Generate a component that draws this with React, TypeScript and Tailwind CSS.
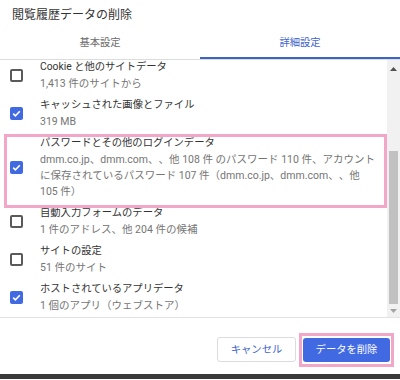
import React from "react";

const FONT = { fontFamily: 'Roboto, "Noto Sans CJK JP", sans-serif' };

function Box({ checked }: { checked: boolean }) {
  if (checked) {
    return (
      <div className="w-[13px] h-[13px] rounded-[2px] bg-[#4169e1] flex items-center justify-center">
        <svg width="11" height="11" viewBox="0 0 11 11">
          <path d="M2.2 5.6 L4.4 7.8 L8.8 3.2" fill="none" stroke="#fff" strokeWidth="1.6" />
        </svg>
      </div>
    );
  }
  return <div className="w-[13px] h-[13px] rounded-[2px] border-2 border-[#5a5a5a] bg-white" />;
}

function Item({ checked, title, sub }: { checked: boolean; title: string; sub: React.ReactNode }) {
  return (
    <div className="flex items-center py-[2px]">
      <div className="w-[40px] pl-[10px] flex items-center shrink-0">
        <Box checked={checked} />
      </div>
      <div className="flex flex-col">
        <div className="text-[10.3px] leading-[18px] text-[#333333] whitespace-nowrap">{title}</div>
        <div className="text-[10.5px] leading-[16px] text-[#757575] whitespace-nowrap [text-spacing-trim:space-all]">{sub}</div>
      </div>
    </div>
  );
}

export default function App() {
  return (
    <div className="w-[400px] h-[380px] bg-white flex flex-col relative overflow-hidden" style={FONT}>
      <div className="h-[29px] flex items-center px-[12px] text-[12px] text-[#333333] shrink-0">
        閲覧履歴データの削除
      </div>
      <div className="flex border-b border-[#dcdcdc] shrink-0">
        <div className="flex-1 h-[30px] flex items-center justify-center text-[10.3px] text-[#6b6b6b] border-b-2 border-transparent">
          基本設定
        </div>
        <div className="flex-1 h-[30px] flex items-center justify-center text-[10.3px] text-[#3e64c9] border-b-2 border-[#3e64c9]">
          詳細設定
        </div>
      </div>
      <div className="flex h-[257px] shrink-0 overflow-hidden">
        <div className="flex-1 overflow-hidden">
          <div className="-mt-[4px] flex flex-col">
            <Item checked={false} title="Cookie と他のサイトデータ" sub="1,413 件のサイトから" />
            <Item checked={true} title="キャッシュされた画像とファイル" sub="319 MB" />
            <Item
              checked={true}
              title="パスワードとその他のログインデータ"
              sub={
                <>
                  dmm.co.jp、dmm.com、、他 108 件 のパスワード 110 件、アカウント
                  <br />
                  に保存されているパスワード 107 件（dmm.co.jp、dmm.com、、他
                  <br />
                  105 件）
                </>
              }
            />
            <Item checked={false} title="自動入力フォームのデータ" sub="1 件のアドレス、他 204 件の候補" />
            <Item checked={false} title="サイトの設定" sub="51 件のサイト" />
            <Item checked={true} title="ホストされているアプリデータ" sub="1 個のアプリ（ウェブストア）" />
          </div>
        </div>
        <div className="w-[13px] bg-[#f1f1f1] flex flex-col items-center shrink-0">
          <div className="h-[17px] flex items-center justify-center">
            <svg width="7" height="4" viewBox="0 0 7 4">
              <path d="M0 4 L3.5 0 L7 4 Z" fill="#505050" />
            </svg>
          </div>
          <div className="h-[74px]" />
          <div className="w-[9px] h-[153px] bg-[#c1c1c1]" />
          <div className="flex-1 flex items-center justify-center">
            <svg width="7" height="4" viewBox="0 0 7 4">
              <path d="M0 0 L7 0 L3.5 4 Z" fill="#a3a3a3" />
            </svg>
          </div>
        </div>
      </div>
      <div className="border-t border-[#e3e3e3] h-[57px] flex justify-end items-start pt-[15px] pr-[6px] shrink-0">
        <button className="mt-[4px] h-[25px] w-[79px] rounded-[3px] border border-[#dadce0] bg-white text-[10.3px] text-[#3e64c9] flex items-center justify-center mr-[3px]">
          キャンセル
        </button>
        <div className="border-[3px] border-[#f2a7c8] px-[1px] py-[2px]">
          <button className="h-[24px] w-[87px] rounded-[3px] bg-[#4169e1] text-white text-[10.3px] flex items-center justify-center">
            データを削除
          </button>
        </div>
      </div>
      <div className="h-[5px] bg-[#3a3a3a] shrink-0" />
      <div className="absolute left-[4px] top-[134px] w-[383px] h-[74px] border-[3px] border-[#f2a7c8] pointer-events-none" />
    </div>
  );
}
